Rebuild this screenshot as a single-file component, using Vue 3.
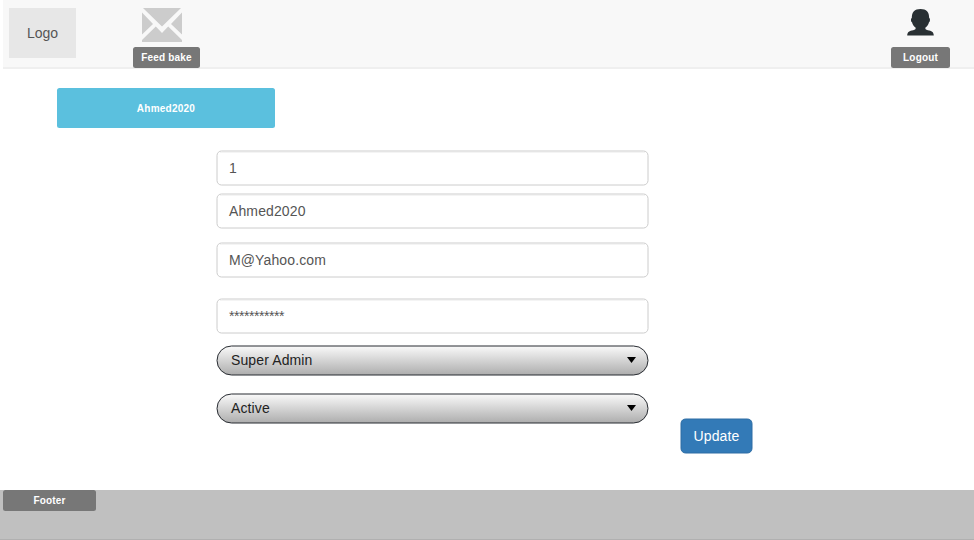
<script setup>
import { ref } from 'vue'

const fields = ref([
  { value: '1', kind: 'id' },
  { value: 'Ahmed2020', kind: 'name' },
  { value: 'M@Yahoo.com', kind: 'email' },
  { value: '***********', kind: 'password' }
])
const selects = ref(['Super Admin', 'Active'])
</script>

<template>
  <div class="page">
    <header class="navbar">
      <div class="logo">Logo</div>
      <a class="nav-item feedback">
        <svg width="40" height="34" viewBox="0 0 40 34">
          <path fill="#ccc" d="M1 0H39L20 18.5ZM0 4.5L11 16L0 26.5ZM40 4.5L29 16L40 26.5ZM13.8 18.5L20 25L26.2 18.5L40 32V34H0V32Z" />
        </svg>
        <span class="tag">Feed bake</span>
      </a>
      <a class="nav-item logout">
        <svg width="27" height="27" viewBox="0 0 27 27">
          <path fill="#293033" d="M13.5 0C19.5 0 22.2 3 22.2 9C23.4 9.3 23.2 12.8 22 13.2C21.4 15.5 20 17.4 18.3 18.8C18.3 20.3 19 20.8 20.8 21.3C24.5 22 26.6 22.8 26.8 26.4H.2C.4 22.8 2.5 22 6.2 21.3C8 20.8 8.7 20.3 8.7 18.8C7 17.4 5.6 15.5 5 13.2C3.8 12.8 3.6 9.3 4.8 9C4.8 3 7.5 0 13.5 0Z" />
        </svg>
        <span class="tag">Logout</span>
      </a>
    </header>

    <main>
      <div class="user">Ahmed2020</div>
      <form class="form" @submit.prevent>
        <div class="column">
          <div v-for="f in fields" :key="f.kind" class="field" :class="f.kind">
            <svg class="frame" width="433" height="36">
              <rect x="1" y="1" width="431" height="34" rx="4.5" fill="#fff" stroke="#ccc" />
              <path d="M4 2.5H429" stroke="#f4f4f4" />
            </svg>
            <span class="value">{{ f.value }}</span>
          </div>
          <div v-for="s in selects" :key="s" class="select">
            <svg class="frame" width="433" height="31">
              <defs>
                <linearGradient id="silver" x2="0" y2="1">
                  <stop offset="0" stop-color="#fafafa" />
                  <stop offset="1" stop-color="#adadad" />
                </linearGradient>
              </defs>
              <rect x="1" y="1" width="431" height="29" rx="14.5" fill="url(#silver)" stroke="#272b31" />
            </svg>
            <span class="value">{{ s }}</span>
            <svg class="arrow" width="9" height="6"><path d="M0 0H9L4.5 6Z" /></svg>
          </div>
        </div>
        <button class="update" type="submit">
          <svg class="frame" width="73" height="36">
            <rect x="1" y="1" width="71" height="34" rx="4.5" fill="#337ab7" stroke="#2e6da4" />
          </svg>
          <span class="value">Update</span>
        </button>
      </form>
    </main>

    <footer class="footer"><span class="tag">Footer</span></footer>
  </div>
</template>

<style>
body { margin: 0; background: #fff; }
</style>

<style scoped>
.page {
  width: 974px;
  height: 540px;
  overflow: hidden;
  display: flex;
  flex-direction: column;
  box-sizing: border-box;
  font: 14px/20px "Liberation Sans", Arial, sans-serif;
  color: #555;
}
.navbar {
  box-sizing: border-box;
  height: 69px;
  margin-left: 3px;
  padding: 8px 24px 0 6px;
  display: flex;
  align-items: flex-start;
  background: #f8f8f8;
  border-bottom: 2px solid #efefef;
}
.logo {
  width: 67px;
  height: 50px;
  line-height: 50px;
  text-align: center;
  background: #e7e7e7;
}
.nav-item {
  display: flex;
  flex-direction: column;
  align-items: center;
  justify-content: space-between;
  height: 60px;
}
.nav-item svg { display: block; }
.feedback { width: 67px; margin-left: 57px; }
.feedback svg { margin-right: 9px; }
.logout { width: 59px; margin-left: auto; }
.logout svg { margin-top: 1px; }
.tag {
  display: block;
  width: 100%;
  height: 21px;
  line-height: 21px;
  border-radius: 2.5px;
  background: #777;
  color: #fff;
  font-size: 10px;
  font-weight: bold;
  letter-spacing: 0.15px;
  text-align: center;
  white-space: nowrap;
}
main { flex: 1; padding: 19px 0 0 57px; }
.user {
  width: 218px;
  height: 40px;
  line-height: 42px;
  border-radius: 2.5px;
  background: #5bc0de;
  color: #fff;
  font-size: 10px;
  font-weight: bold;
  letter-spacing: 0.25px;
  text-align: center;
}
.form { display: flex; margin: 22px 0 0 159px; }
.column { width: 433px; }
.field, .select { position: relative; display: flex; align-items: center; letter-spacing: 0.12px; }
.field { height: 36px; padding-left: 13px; }
.name { margin-top: 7px; }
.email { margin-top: 13px; }
.password { margin-top: 20px; letter-spacing: -0.45px; }
.select { height: 31px; margin-top: 11px; padding: 0 13px 0 15px; color: #222; }
.select + .select { margin-top: 17px; }
.select .value { margin-top: -2px; }
.frame { position: absolute; left: 0; top: 0; }
.value { position: relative; flex: 1; }
.arrow { position: relative; display: block; margin-top: -2px; }
.update {
  position: relative;
  width: 73px;
  height: 36px;
  margin: 268px 0 0 31px;
  padding: 0;
  border: 0;
  background: none;
  color: #fff;
  font: inherit;
  letter-spacing: 0.15px;
}
.footer {
  box-sizing: border-box;
  height: 50px;
  padding-left: 3px;
  background: #c0c0c0;
  border-bottom: 1px solid #b0b0b0;
}
.footer .tag { width: 93px; }
</style>
